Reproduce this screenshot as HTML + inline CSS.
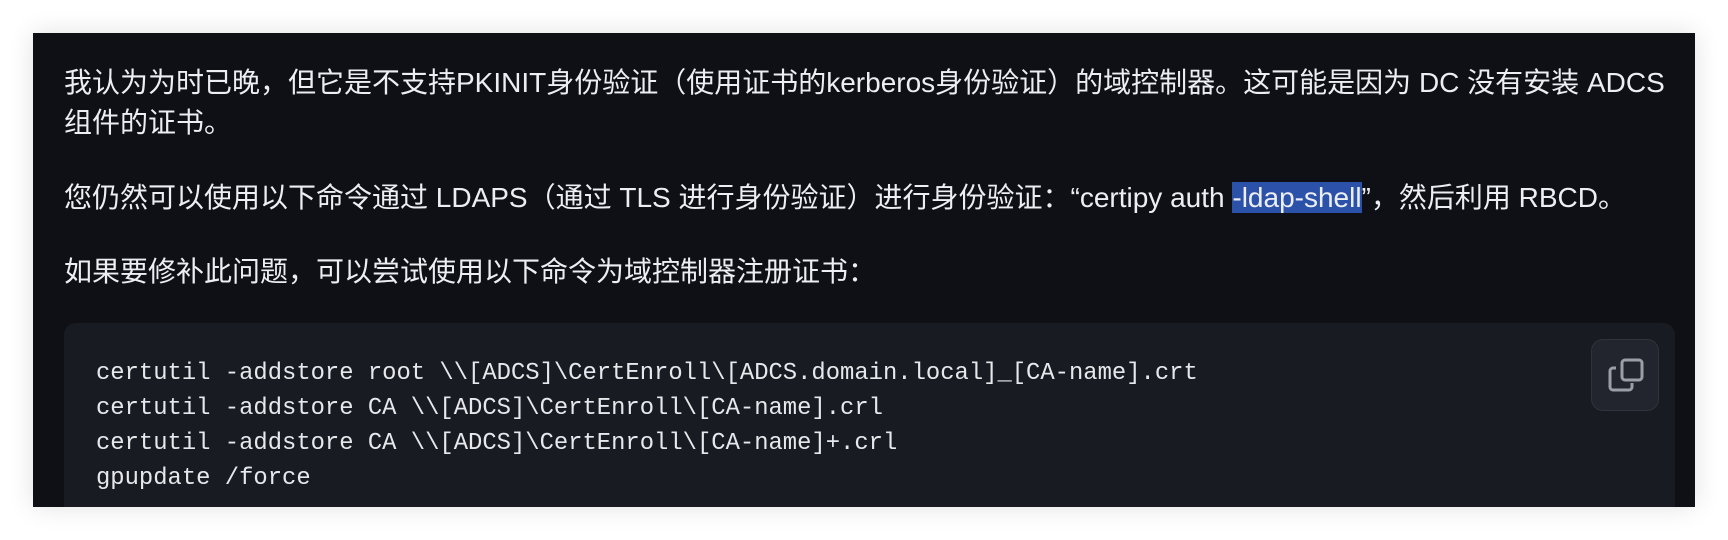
<!DOCTYPE html>
<html><head><meta charset="utf-8"><style>
body{margin:0;width:1728px;height:540px;background:#fff;overflow:hidden;font-family:"Liberation Sans","Noto Sans CJK SC",sans-serif}
.panel{position:absolute;left:33px;top:33px;width:1662px;height:474px;background:#0e1015;box-shadow:0 0 24px rgba(0,0,0,.12);overflow:hidden}
p{position:absolute;left:31px;margin:0;color:#eceef2;font-size:28px;line-height:40px;white-space:nowrap}
.hl{background:#2b52a8}
.code{position:absolute;left:31px;top:290px;width:1611px;height:184px;background:#181b22;border-radius:12px 12px 0 0;overflow:hidden}
pre{position:absolute;left:32px;top:33px;margin:0;font-family:"Liberation Mono",monospace;font-size:23.85px;line-height:35px;color:#e6e8ec}
.btn{position:absolute;left:1527px;top:16px;width:66px;height:70px;border:1px solid #30333c;border-radius:12px;background:#22252d}
</style></head><body>
<div class="panel">
<p style="top:30px">我认为为时已晚，但它是不支持PKINIT身份验证（使用证书的kerberos身份验证）的域控制器。这可能是因为 DC 没有安装 ADCS<br>组件的证书。</p>
<p style="top:145px">您仍然可以使用以下命令通过 LDAPS（通过 TLS 进行身份验证）进行身份验证：“certipy auth <span class="hl">-ldap-shell</span>”，然后利用 RBCD。</p>
<p style="top:219px">如果要修补此问题，可以尝试使用以下命令为域控制器注册证书：</p>
<div class="code">
<pre>certutil -addstore root \\[ADCS]\CertEnroll\[ADCS.domain.local]_[CA-name].crt
certutil -addstore CA \\[ADCS]\CertEnroll\[CA-name].crl
certutil -addstore CA \\[ADCS]\CertEnroll\[CA-name]+.crl
gpupdate /force</pre>
<div class="btn"><svg width="66" height="70" viewBox="0 0 66 70"><g fill="none" stroke="#9a9ea7" stroke-width="3" stroke-linejoin="round"><rect x="30" y="20" width="20" height="20" rx="3"/><path d="M24 28h-3a3 3 0 0 0-3 3v16a3 3 0 0 0 3 3h16a3 3 0 0 0 3-3v-4"/></g></svg></div>
</div>
</div>
</body></html>
